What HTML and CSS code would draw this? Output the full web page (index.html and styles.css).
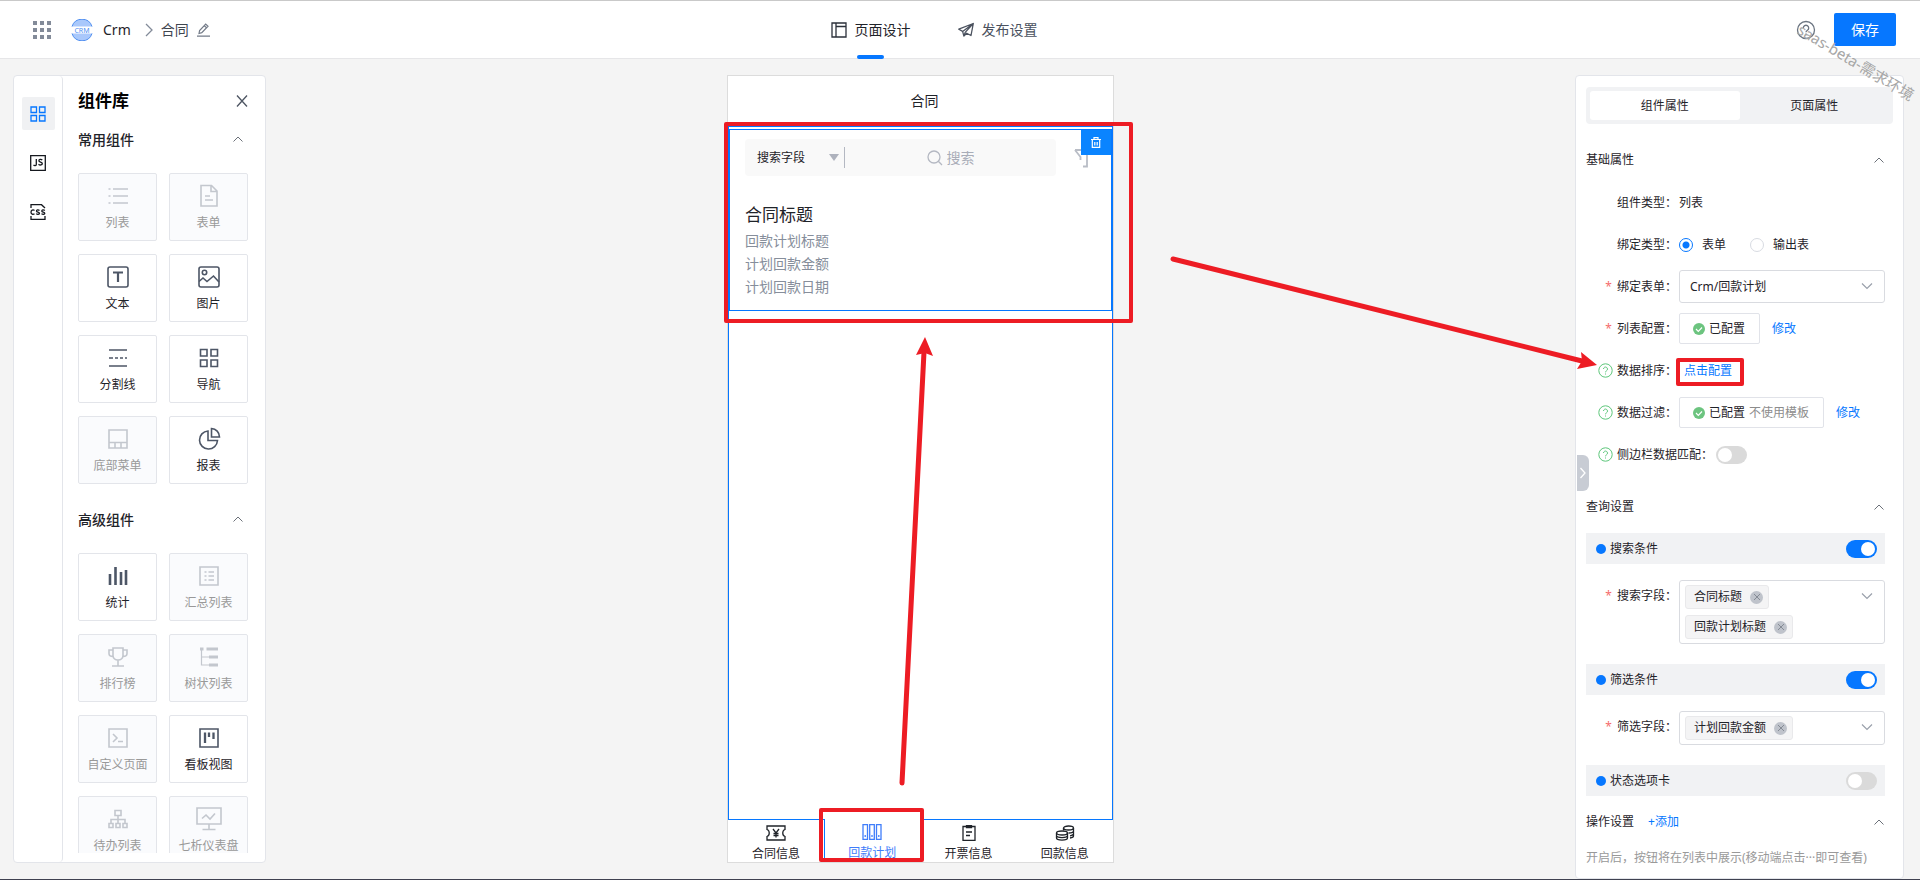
FILE: index.html
```html
<!DOCTYPE html>
<html lang="zh-CN">
<head>
<meta charset="utf-8">
<title>Crm - 合同</title>
<link rel="stylesheet" href="styles.css">
</head>
<body>
<header class="topbar">
  <div class="crumbs">
    <button class="icon-btn apps" aria-label="应用">
      <svg width="18" height="18" viewBox="0 0 18 18" fill="#838b99"><path d="M0 0h4v4H0zM7 0h4v4H7zM14 0h4v4h-4zM0 7h4v4H0zM7 7h4v4H7zM14 7h4v4h-4zM0 14h4v4H0zM7 14h4v4H7zM14 14h4v4h-4z"/></svg>
    </button>
    <svg class="logo" width="22" height="22" viewBox="0 0 22 22"><path d="M1 7.500A10.500 10.500 0 0 1 21 7.500z" fill="#a9c8fb"/><path d="M1 14.500A10.500 10.500 0 0 0 21 14.500z" fill="#a9c8fb"/><path d="M1 7.500A10.500 10.500 0 0 1 21 7.500M1 14.500A10.500 10.500 0 0 0 21 14.500" fill="none" stroke="#4f8ef0"/><text x="11" y="13.500" text-anchor="middle" class="logo-text">CRM</text></svg>
    <a class="app-name" href="#">Crm</a>
    <svg class="sep" width="8" height="14" viewBox="0 0 8 14" fill="none" stroke="#838b99" stroke-width="1.300"><path d="M1 1l6 6-6 6"/></svg>
    <span class="page-name">合同</span>
    <button class="icon-btn" aria-label="编辑名称">
      <svg width="14" height="14" viewBox="0 0 14 14" fill="none" stroke="#737b88" stroke-width="1.200"><path d="M1 13.200h13M3 10.500l.6-3L9.700 1l2.300 2.200-6.200 6.500zM8.200 2.600l2.300 2.200"/></svg>
    </button>
  </div>
  <nav class="top-tabs">
    <a class="top-tab active" href="#">
      <svg width="16" height="16" viewBox="0 0 16 16" fill="none" stroke="#2b303a" stroke-width="1.300"><path d="M1 1h14v14H1zM5 1v14M5 4.500h10"/></svg>页面设计</a>
    <a class="top-tab" href="#">
      <svg width="16" height="16" viewBox="0 0 16 16" fill="none" stroke="#4a515e" stroke-width="1.300" stroke-linejoin="round"><path d="M15.300 1.500L.800 7.200l3.800 2.200L15.300 1.500 13 13.500l-4.300-2.300-2.800 2.900-1.300-4.700M15.300 1.500L7.200 10.400l-1.300 3.700"/></svg>发布设置</a>
  </nav>
  <div class="actions">
    <button class="icon-btn" aria-label="帮助">
      <svg width="20" height="20" viewBox="0 0 20 20" fill="none" stroke="#6b7480" stroke-width="1.300"><circle cx="10" cy="10" r="8.500"/><path d="M7.300 8a2.700 2.700 0 1 1 4.100 2.300c-1 .6-1.400 1-1.400 2M10 13.500v1.300"/></svg>
    </button>
    <button class="save">保存</button>
  </div>
</header>

<main class="workspace">
  <aside class="library">
    <nav class="rail">
      <button class="rail-btn active" aria-label="组件">
        <svg width="16" height="16" viewBox="0 0 16 16" fill="none" stroke="#0677ff" stroke-width="1.300"><path d="M1 1h5.500v5.500H1zM9.500 1H15v5.500H9.500zM1 9.500h5.500V15H1zM9.500 9.500H15V15H9.500z"/></svg>
      </button>
      <button class="rail-btn" aria-label="JS">
        <svg width="16" height="16" viewBox="0 0 16 16" fill="none" stroke="#15181e" stroke-width="1.300"><path d="M.7.700h14.600v14.600H.7zM6.300 4v5.500c0 1.300-1.800 1.500-2.800.6M12.300 5C11 3.800 8.700 4.300 8.900 5.800c.2 1.500 3.300 1 3.400 2.700.1 1.700-2.500 1.900-3.800.8"/></svg>
      </button>
      <button class="rail-btn" aria-label="CSS">
        <svg width="16" height="16" viewBox="0 0 16 16" fill="none" stroke="#15181e" stroke-width="1.300"><path d="M1 4V.7h10.500L15 4M1 12v3.300h14V12M4.500 6.500C3 5.300 1 6.300 1 8.200s2 2.800 3.500 1.600M9.500 6.500C8.300 5.500 6.300 5.900 6.500 7.100c.1 1.200 2.900.8 3 2.100 0 1.300-2.300 1.400-3.300.4M14.800 6.500c-1.200-1-3.200-.6-3 .6.100 1.200 2.900.8 3 2.100 0 1.300-2.300 1.400-3.300.4"/></svg>
      </button>
    </nav>
    <div class="lib-body">
      <div class="lib-head">
        <h2>组件库</h2>
        <button class="icon-btn" aria-label="关闭"><svg width="12" height="12" viewBox="0 0 12 12" fill="none" stroke="#4d5562" stroke-width="1.300"><path d="M1 .5l10 11M11 .5L1 11.500"/></svg></button>
      </div>
      <div class="lib-scroll">
        <section class="lib-group">
          <h3>常用组件<svg width="10" height="6" viewBox="0 0 10 6" fill="none" stroke="#6b7078"><path d="M.5 5.500L5 1l4.500 4.500"/></svg></h3>
          <div class="cards">
            <button class="card off"><svg viewBox="0 0 24 24"><path d="M2.500 5h2M2.500 12h2M2.500 19h2M7 5h15M7 12h15M7 19h15"/></svg>列表</button>
            <button class="card off"><svg viewBox="0 0 24 24"><path d="M4 1.500h10.500L20 7v15H4zM14 1.500V7.500h6M8 12h5M8 16h8"/></svg>表单</button>
            <button class="card"><svg viewBox="0 0 24 24"><rect x="2" y="2" width="20" height="20" rx="2"/><path d="M7 7.500h10M12 7.500V17" stroke-width="2.200"/></svg>文本</button>
            <button class="card"><svg viewBox="0 0 24 24"><rect x="2" y="2" width="20" height="20" rx="2"/><circle cx="7.500" cy="7.500" r="2.200"/><path d="M2 16.500l4-3.500 4 3.500 6.500-5.500 5.500 6"/></svg>图片</button>
            <button class="card"><svg viewBox="0 0 24 24"><path d="M3 4h18M3 12h4M9 12h3M14 12h3M19 12h2M3 20h18"/></svg>分割线</button>
            <button class="card"><svg viewBox="0 0 24 24"><path d="M3.500 3.500h6.500v6.500H3.500zM14 3.500h6.500v6.500H14zM3.500 14h6.500v6.500H3.500zM14 14h6.500v6.500H14z"/></svg>导航</button>
            <button class="card off"><svg viewBox="0 0 24 24"><path d="M3 3h18v18H3zM3 15.500h18M9 15.500V21M15 15.500V21"/></svg>底部菜单</button>
            <button class="card"><svg viewBox="0 0 24 24"><path d="M11 4a9 9 0 1 0 9.500 9.500H11zM14.500 1.500V10H22.500A8.500 8.500 0 0 0 14.500 1.500z"/></svg>报表</button>
          </div>
        </section>
        <section class="lib-group">
          <h3>高级组件<svg width="10" height="6" viewBox="0 0 10 6" fill="none" stroke="#6b7078"><path d="M.5 5.500L5 1l4.500 4.500"/></svg></h3>
          <div class="cards">
            <button class="card"><svg viewBox="0 0 24 24"><path d="M4 10v11M9.500 3v18M15 8v13M20 6v15" stroke-width="2.600"/></svg>统计</button>
            <button class="card off"><svg viewBox="0 0 24 24"><path d="M3 3h18v18H3zM7.500 8h2M7.500 12h2M7.500 16h2M11.500 8H17M11.500 12H17M11.500 16H17"/></svg>汇总列表</button>
            <button class="card off"><svg viewBox="0 0 24 24"><path d="M7 3h10v7.500c0 6-10 6-10 0zM7 5H3v3.500c0 2 2 3 4 3M17 5h4v3.500c0 2-2 3-4 3M12 15.500V21M6 21h12"/></svg>排行榜</button>
            <button class="card off"><svg viewBox="0 0 24 24"><path d="M4.500 5v15H12M4.500 12H12" stroke-width="1.200"/><path d="M3 4h3.500M9.500 4H21M12 12h9M12 20h9" stroke-width="3"/></svg>树状列表</button>
            <button class="card off"><svg viewBox="0 0 24 24"><path d="M3 3h18v18H3zM7 8l4 4-4 4M12 15.500h5"/></svg>自定义页面</button>
            <button class="card"><svg viewBox="0 0 24 24"><path d="M3 3h18v18H3z"/><path d="M8 6.500V17M12 6.500V11M16.500 6.500V13" stroke-width="2.300"/></svg>看板视图</button>
            <button class="card off"><svg viewBox="0 0 24 24"><path d="M9 3.500h6v5H9zM12 8.500V16M5 16v-3.500h14V16M3 16.500h4v4H3zM10 16.500h4v4h-4zM17 16.500h4v4h-4z"/></svg>待办列表</button>
            <button class="card off"><svg class="wide" viewBox="0 0 28 24"><path d="M2 1h24v16H2zM14 17v5M7.500 22.500h13M7 11.500l4-3.500 4 4 5-5.500"/></svg>七析仪表盘</button>
          </div>
        </section>
      </div>
    </div>
  </aside>

  <section class="stage">
    <div class="phone">
      <div class="phone-title">合同</div>
      <div class="phone-body">
        <div class="widget">
          <button class="delete" aria-label="删除"><svg width="10" height="11" viewBox="0 0 10 11" fill="none" stroke="#fff" stroke-width="1.200"><path d="M0 2.500h10M3 2.500V.7h4v1.800M1.300 2.500v7.800h7.400V2.500M3.800 5v3.500M6.200 5v3.500"/></svg></button>
          <div class="search-row">
            <div class="search">
              <select class="field" aria-label="搜索字段"><option>搜索字段</option></select>
              <svg class="caret" width="10" height="7" viewBox="0 0 10 7"><path d="M0 0h10L5 7z" fill="#aeb2bd"/></svg>
              <label class="query">
                <svg width="16" height="16" viewBox="0 0 16 16" fill="none" stroke="#b4b8c2" stroke-width="1.300"><circle cx="7" cy="7" r="6"/><path d="M11.300 11.300L15 15"/></svg>
                <input type="text" placeholder="搜索" aria-label="搜索">
              </label>
            </div>
            <svg class="filter" width="16" height="20" viewBox="0 0 16 20" fill="none" stroke="#b9bdc6" stroke-width="1.800"><path d="M1 2h14l-2 5v11.500h-4M1 2l5.500 7v3"/></svg>
          </div>
          <h4>合同标题</h4>
          <p>回款计划标题</p>
          <p>计划回款金额</p>
          <p>计划回款日期</p>
        </div>
      </div>
      <nav class="phone-tabs">
        <a href="#"><svg viewBox="0 0 20 16"><path d="M1 1h18v3.500c-3 1-3 6 0 7V15H1v-3.500c3-1 3-6 0-7zM7 4l3 4 3-4M10 8v4.500M7.500 8.500h5M7.500 10.500h5"/></svg>合同信息</a>
        <a href="#" class="current"><svg viewBox="0 0 20 16"><path d="M1 .7h4.500v14.600H1zM7.700.7h4.600v14.600H7.700zM14.500.7H19v14.600h-4.500zM3.200 11v2M10 11v2M16.800 11v2"/></svg>回款计划</a>
        <a href="#"><svg viewBox="0 0 20 16"><path d="M4 1.500h12v14H4zM7.500.5h5v2h-5zM7 7h6M7 10.500h4"/></svg>开票信息</a>
        <a href="#"><svg viewBox="0 0 20 16"><ellipse cx="13.500" cy="3" rx="5" ry="2"/><path d="M8.500 3v2.500M18.500 3v8c0 1-1.500 1.700-3.500 2M18.500 6c0 1.500-2.500 2-5 2M18.500 9c-.3 1-1.500 1.600-3.500 1.800"/><ellipse cx="7" cy="8" rx="5.500" ry="2"/><path d="M1.500 8v5c0 2.700 11 2.700 11 0V8M1.500 10.500c0 2.700 11 2.700 11 0"/></svg>回款信息</a>
      </nav>
    </div>
  </section>

  <aside class="props">
    <button class="handle" aria-label="收起"><svg width="6" height="12" viewBox="0 0 6 12" fill="none" stroke="#fff" stroke-width="1.300"><path d="M.5 1L5 6 .5 11"/></svg></button>
    <div class="segmented">
      <button class="seg active">组件属性</button>
      <button class="seg">页面属性</button>
    </div>
    <div class="props-body">
      <h3 class="sec">基础属性<svg width="10" height="6" viewBox="0 0 10 6"><path d="M.5 5.500L5 1l4.500 4.500"/></svg></h3>
      <div class="rows">
        <div class="row"><span class="label">组件类型：</span><span>列表</span></div>
        <div class="row short"><span class="label">绑定类型：</span>
          <div class="radios"><label><input type="radio" name="bind" checked>表单</label><label><input type="radio" name="bind">输出表</label></div></div>
        <div class="row"><label class="label req" for="form">绑定表单：</label>
          <div class="pick"><select id="form"><option>Crm/回款计划</option></select><svg class="down" width="12" height="7" viewBox="0 0 12 7"><path d="M1 .5l5 5 5-5"/></svg></div></div>
        <div class="row short"><span class="label req">列表配置：</span>
          <div class="conf"><button class="done"><svg width="12" height="12" viewBox="0 0 12 12"><circle cx="6" cy="6" r="6" fill="#6cc47f"/><path d="M3 6l2.300 2.300L9 4.500" fill="none" stroke="#fff" stroke-width="1.200"/></svg>已配置</button><a href="#">修改</a></div></div>
        <div class="row"><span class="label"><svg class="tip" width="15" height="15" viewBox="0 0 15 15"><circle cx="7.500" cy="7.500" r="6.700"/><path d="M5.500 6a2 2 0 1 1 3 1.800c-.8.500-1 .8-1 1.500M7.500 10.500v1"/></svg>数据排序：</span><a class="setup" href="#">点击配置</a></div>
        <div class="row short"><span class="label"><svg class="tip" width="15" height="15" viewBox="0 0 15 15"><circle cx="7.500" cy="7.500" r="6.700"/><path d="M5.500 6a2 2 0 1 1 3 1.800c-.8.500-1 .8-1 1.500M7.500 10.500v1"/></svg>数据过滤：</span>
          <div class="conf"><button class="done"><svg width="12" height="12" viewBox="0 0 12 12"><circle cx="6" cy="6" r="6" fill="#6cc47f"/><path d="M3 6l2.300 2.300L9 4.500" fill="none" stroke="#fff" stroke-width="1.200"/></svg>已配置 <span class="muted">不使用模板</span></button><a href="#">修改</a></div></div>
        <div class="row long"><label class="label" for="side"><svg class="tip" width="15" height="15" viewBox="0 0 15 15"><circle cx="7.500" cy="7.500" r="6.700"/><path d="M5.500 6a2 2 0 1 1 3 1.800c-.8.500-1 .8-1 1.500M7.500 10.500v1"/></svg>侧边栏数据匹配：</label><input id="side" type="checkbox" class="switch"></div>
      </div>
      <h3 class="sec">查询设置<svg width="10" height="6" viewBox="0 0 10 6"><path d="M.5 5.500L5 1l4.500 4.500"/></svg></h3>
      <label class="bar"><span class="dot"></span>搜索条件<input type="checkbox" class="switch" checked></label>
      <div class="row top"><span class="label req">搜索字段：</span>
        <div class="pick tags"><span class="tag">合同标题<button aria-label="移除"><svg width="6" height="6" viewBox="0 0 6 6"><path d="M0 0l6 6M6 0L0 6"/></svg></button></span><span class="tag">回款计划标题<button aria-label="移除"><svg width="6" height="6" viewBox="0 0 6 6"><path d="M0 0l6 6M6 0L0 6"/></svg></button></span><svg class="down" width="12" height="7" viewBox="0 0 12 7"><path d="M1 .5l5 5 5-5"/></svg></div></div>
      <label class="bar"><span class="dot"></span>筛选条件<input type="checkbox" class="switch" checked></label>
      <div class="row top"><span class="label req">筛选字段：</span>
        <div class="pick tags"><span class="tag">计划回款金额<button aria-label="移除"><svg width="6" height="6" viewBox="0 0 6 6"><path d="M0 0l6 6M6 0L0 6"/></svg></button></span><svg class="down" width="12" height="7" viewBox="0 0 12 7"><path d="M1 .5l5 5 5-5"/></svg></div></div>
      <label class="bar"><span class="dot"></span>状态选项卡<input type="checkbox" class="switch"></label>
      <h3 class="sec last">操作设置<a href="#">+添加</a><svg width="10" height="6" viewBox="0 0 10 6"><path d="M.5 5.500L5 1l4.500 4.500"/></svg></h3>
      <p class="hint">开启后，按钮将在列表中展示(移动端点击···即可查看)</p>
    </div>
  </aside>
</main>

<div class="watermark">saas-beta-需求环境</div>
<svg class="notes" aria-hidden="true">
  <g fill="none" stroke="#ed1c24" stroke-width="4" stroke-linejoin="round">
    <rect x="726" y="124" width="405" height="197"/>
    <rect x="821" y="810" width="101" height="50"/>
    <rect x="1678" y="360" width="64" height="24"/>
  </g>
  <g fill="none" stroke="#ed1c24" stroke-width="5" stroke-linecap="round"><path d="M902 783L924 352M1173 259L1582 361"/></g>
  <path d="M925 337l8 19-8-3-9 2zM1597 365l-16-13 1 9-5 8z" fill="#ed1c24"/>
</svg>
</body>
</html>
```

FILE: styles.css
```css
* { box-sizing: border-box; }

body {
  margin: 0;
  position: relative;
  height: 100vh;
  display: flex;
  flex-direction: column;
  overflow: hidden;
  background: #f4f4f4;
  border-top: 1px solid #c9c9c9;
  border-bottom: 1px solid #3f4150;
  color: #1f2329;
  font: 12px/18px "Noto Sans", "Noto Sans CJK SC", sans-serif;
}

h2, h3, h4, p { margin: 0; font-weight: 400; }
a { color: #0677ff; text-decoration: none; }
button, input, select { font: inherit; color: inherit; margin: 0; }
button { padding: 0; border: 0; background: none; }
svg { display: block; flex: none; }
.icon-btn { display: flex; }

/* header */
.topbar {
  flex: none;
  height: 58px;
  display: grid;
  grid-template-columns: 1fr auto 1fr;
  align-items: center;
  padding: 0 24px 0 33px;
  background: #fff;
  border-bottom: 1px solid #e6e6e8;
}
.crumbs { display: flex; align-items: center; }
.logo { margin: 0 10px 0 20px; }
.logo-text { font-size: 7px; fill: #4f8ef0; }
.app-name { color: #1f2329; font-size: 14px; }
.sep { margin: 0 8px 0 14px; }
.page-name { margin-right: 7px; font-size: 14px; color: #3f4650; }
.top-tabs { display: flex; gap: 47px; align-self: stretch; padding-right: 61px; }
.top-tab {
  position: relative;
  display: flex;
  align-items: center;
  gap: 8px;
  font-size: 14px;
  color: #4a515e;
}
.top-tab.active { color: #1f2329; }
.top-tab.active::after {
  content: "";
  position: absolute;
  left: 50%;
  bottom: -1px;
  width: 27px;
  height: 4px;
  margin-left: -14px;
  border-radius: 2px;
  background: #0677ff;
}
.actions { display: flex; justify-content: flex-end; align-items: center; gap: 18px; }
.save {
  width: 62px;
  height: 33px;
  border-radius: 2px;
  background: #0677ff;
  color: #fff;
  font-size: 14px;
}

/* three columns */
.workspace {
  flex: 1;
  min-height: 0;
  display: grid;
  grid-template-columns: 253px 1fr 329px;
  padding: 16px 16px 0 13px;
}

/* component library */
.library {
  display: flex;
  min-height: 0;
  margin-bottom: 16px;
  background: #fff;
  border: 1px solid #e3e5ea;
  border-radius: 4px;
}
.rail {
  width: 49px;
  display: flex;
  flex-direction: column;
  align-items: center;
  gap: 16px;
  padding-top: 21px;
  border-right: 1px solid #e3e5ea;
  border-radius: 0 4px 4px 0;
}
.rail-btn { width: 33px; height: 33px; display: grid; place-items: center; border-radius: 2px; }
.rail-btn.active { background: #f0f1f3; }
.lib-body { flex: 1; min-width: 0; display: flex; flex-direction: column; padding: 13px 17px 9px 15px; }
.lib-head { display: flex; justify-content: space-between; align-items: center; height: 24px; }
.lib-head h2 { font-size: 17px; line-height: 24px; font-weight: 700; color: #000; }
.lib-scroll { flex: 1; min-height: 0; overflow: hidden; padding-top: 17px; }
.lib-group { padding-bottom: 26px; }
.lib-group h3 {
  display: flex;
  justify-content: space-between;
  align-items: center;
  height: 20px;
  padding-right: 5px;
  font-weight: 500;
}
.lib-group h3 svg { margin-bottom: 3px; }
.cards { display: grid; grid-template-columns: 1fr 1fr; gap: 13px 12px; padding-top: 23px; }
.card {
  height: 68px;
  display: flex;
  flex-direction: column;
  align-items: center;
  gap: 6px;
  padding-top: 10px;
  border: 1px solid #e3e5ea;
  border-radius: 2px;
  background: #fff;
  color: #1f2329;
  white-space: nowrap;
}
.card svg { width: 24px; height: 24px; fill: none; stroke: #4d5666; stroke-width: 1.6px; }
.card svg.wide { width: 28px; }
.card.off { background: #fafbfd; color: #999; }
.card.off svg { stroke: #c3c7ce; }

/* phone preview */
.stage { display: flex; justify-content: center; min-height: 0; padding-bottom: 16px; }
.phone { width: 387px; display: flex; flex-direction: column; background: #fff; border: 1px solid #dcdcdc; }
.phone-title { height: 50px; line-height: 50px; padding-left: 8px; text-align: center; font-size: 14px; }
.phone-body { flex: 1; padding-top: 2px; border: 1px solid #0677ff; }
.widget { position: relative; border: 1px solid #0677ff; padding: 9px 16px 12px 15px; }
.delete {
  position: absolute;
  top: 0;
  right: 0;
  width: 30px;
  height: 25px;
  display: grid;
  place-items: center;
  background: #0a84ff;
}
.search-row { display: flex; align-items: center; gap: 18px; }
.search { flex: 1; display: flex; align-items: center; height: 37px; border-radius: 4px; background: #f9f9f9; }
.field { appearance: none; width: 84px; height: 20px; padding: 0 0 0 12px; border: 0; background: none; outline: 0; }
.caret { margin-right: 5px; }
.query { flex: 1; display: flex; justify-content: center; align-items: center; gap: 4px; height: 21px; border-left: 1px solid #b4b8c2; }
.query input { width: 28px; height: 20px; padding: 0; border: 0; background: none; outline: 0; font-size: 14px; }
.query input::placeholder { color: #a9adb8; opacity: 1; }
.filter { margin-right: 5px; }
.widget h4 { margin: 26px 0 2px; font-size: 17px; line-height: 25px; }
.widget p { font-size: 14px; line-height: 23px; color: #868e9b; }
.phone-tabs { height: 42px; display: grid; grid-template-columns: repeat(4, 1fr); }
.phone-tabs a { display: flex; flex-direction: column; align-items: center; gap: 5px; padding-top: 5px; line-height: 16px; color: #1f2329; }
.phone-tabs svg { width: 20px; height: 16px; fill: none; stroke: currentColor; stroke-width: 1.3px; }
.phone-tabs .current { margin-top: -1px; background: #fff; border: 1px solid #0677ff; border-width: 0 1px; color: #3f7dfa; }

/* property panel */
.props {
  position: relative;
  min-height: 0;
  overflow: hidden;
  padding: 11px 10px 0;
  background: #fff;
  border: 1px solid #e3e5ea;
  border-radius: 4px;
}
.handle {
  position: absolute;
  left: 1px;
  top: 379px;
  width: 12px;
  height: 36px;
  display: grid;
  place-items: center;
  border-radius: 0 6px 6px 0;
  background: #c8ccd4;
}
.segmented { display: grid; grid-template-columns: 1fr 1fr; height: 37px; padding: 4px; border-radius: 4px; background: #f1f2f4; }
.seg { border-radius: 3px; }
.seg.active { background: #fff; }
.props-body { padding: 26px 8px 0 0; }
.sec { display: flex; align-items: center; height: 20px; margin-bottom: 16px; font-size: 12px; }
.sec svg { margin: 0 1px 0 auto; fill: none; stroke: #6b7078; }
.sec a { margin-left: 14px; }
.rows { display: flex; flex-direction: column; gap: 10px; padding-bottom: 26px; }
.row { min-height: 33px; display: grid; grid-template-columns: 91px 1fr; align-items: center; gap: 2px; }
.row.short { min-height: 31px; }
.row.long { grid-template-columns: auto 1fr; gap: 3px; padding-left: 12px; }
.row.top { align-items: start; margin: 16px 0 20px; }
.row.top .label { line-height: 31px; }
.label { display: flex; justify-content: flex-end; align-items: center; gap: 4px; white-space: nowrap; }
.req::before { content: "*"; color: #f56c6c; margin-right: 1px; }
.tip { fill: none; stroke: #5cc67a; }
.radios { display: flex; gap: 24px; }
.radios label { display: flex; align-items: center; gap: 9px; }
.radios input { appearance: none; width: 14px; height: 14px; border: 1px solid #d8dbe2; border-radius: 50%; background: #fff; }
.radios input:checked { border-color: #0677ff; background: radial-gradient(circle, #0677ff 3px, #fff 4px); }
.pick { position: relative; border: 1px solid #d9dbe0; border-radius: 3px; }
.pick select { display: block; appearance: none; width: 100%; height: 31px; padding: 0 30px 0 10px; border: 0; background: none; outline: 0; }
.down { position: absolute; right: 11px; top: 12px; fill: none; stroke: #9aa0ab; stroke-width: 1.2px; pointer-events: none; }
.conf { display: flex; align-items: center; gap: 12px; }
.done { display: flex; align-items: center; gap: 4px; height: 31px; padding: 0 14px 0 13px; border: 1px solid #e1e3e9; border-radius: 2px; background: #fff; }
.muted { color: #8c8c8c; }
.setup { padding-left: 5px; }
.switch { appearance: none; width: 31px; height: 18px; padding: 2px; border-radius: 9px; background: #dadada; display: flex; }
.switch::before { content: ""; width: 14px; height: 14px; border-radius: 50%; background: #fff; }
.switch:checked { background: #0677ff; justify-content: flex-end; }
.bar { display: flex; align-items: center; gap: 4px; height: 31px; padding: 0 8px 0 10px; background: #f1f2f4; }
.bar .switch { margin-left: auto; }
.dot { width: 10px; height: 10px; border-radius: 50%; background: #0677ff; }
.tags { display: flex; flex-direction: column; align-items: flex-start; gap: 6px; padding: 4px 5px; }
.tag { display: flex; align-items: center; gap: 8px; height: 24px; padding: 0 5px 0 8px; border: 1px solid #e9e9eb; border-radius: 3px; background: #f4f4f5; }
.tag button { width: 13px; height: 13px; display: grid; place-items: center; border-radius: 50%; background: #bfc3cb; }
.tag svg { fill: none; stroke: #858b95; }
.sec.last { margin: 16px 0 17px; }
.hint { color: #999; white-space: nowrap; }

/* overlays */
.watermark {
  position: absolute;
  top: 52px;
  right: -2px;
  transform: rotate(31deg);
  color: #a6a6a6;
  font-size: 15px;
  white-space: nowrap;
  pointer-events: none;
}
.notes { position: absolute; left: 0; top: -1px; width: 100%; height: 880px; pointer-events: none; }
```
